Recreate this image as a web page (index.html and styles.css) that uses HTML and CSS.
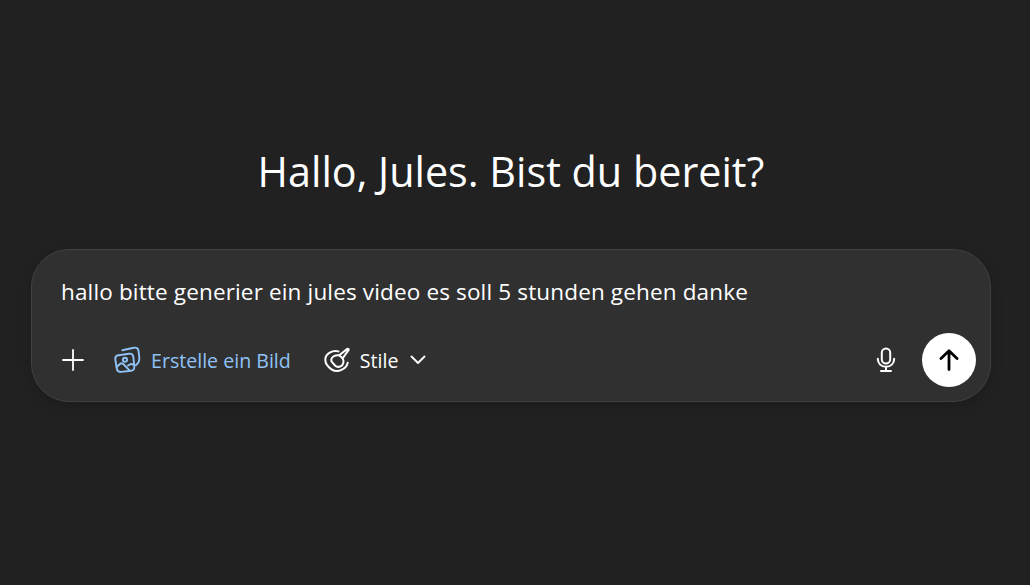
FILE: index.html
```html
<!DOCTYPE html>
<html lang="de">
<head>
<meta charset="utf-8">
<title>Hallo, Jules</title>
<link rel="stylesheet" href="styles.css">
</head>
<body>
<main class="page">
  <h1 class="title">Hallo, Jules. Bist du bereit?</h1>
  <form class="composer">
    <div class="prompt">hallo bitte generier ein jules video es soll 5 stunden gehen danke</div>
    <div class="toolbar">
      <button class="icon-btn plus" type="button" aria-label="Hinzufügen">
        <svg width="22" height="22" viewBox="0 0 22 22" fill="none" stroke="currentColor" stroke-width="1.8" stroke-linecap="round"><path d="M11 1v20M1 11h20"/></svg>
      </button>
      <button class="tool tool-blue" type="button">
        <svg width="28" height="28" viewBox="0 0 28 28" fill="none" stroke="currentColor" stroke-width="1.9" stroke-linecap="round" stroke-linejoin="round"><path d="M2.300 13.500c-.3-2.300 1-4 3.200-4.300l10.500-1.500c2.300-.3 4 1 4.300 3.200l1 9.500c.3 2.300-1 4-3.200 4.300l-10 1.200c-2.300.3-4-1-4.300-3.200z"/><path d="M9.300 4.200l11.500-2.500c2.500-.5 4.300.7 4.700 3l.8 7c.3 2.800-.7 5.500-3.500 7.500"/><circle cx="12" cy="13.800" r="2.100"/><path d="M3.600 21l3.400-3c1-.9 2.300-.9 3.300 0l6 6.200M15 19.600l1.800-1.100c1-.6 2.300-.5 3.200.2"/></svg>
        <span>Erstelle ein Bild</span>
      </button>
      <button class="tool tool-style" type="button">
        <svg width="26" height="26" viewBox="0 0 26 26" fill="none" stroke="currentColor" stroke-width="2" stroke-linecap="round" stroke-linejoin="round"><path d="M14.500 4.400C8.500 3 1.500 6.500 1.300 12.500c-.1 3.500 2.700 7.500 6.200 9.800 3 1.900 6.300 2.300 9.500.9 3.500-1.500 6-4.200 6.700-7.400"/><path d="M23.300 1.900c.9-.5 1.700.3 1.200 1.200l-5.900 8.200-3.400-3z"/><path d="M15.200 8.300c-3.700-.5-7.700 1.200-8 4.500-.1 1.500.6 2.500 1.800 3.400 1 .8 1.400 2 2.800 2.900 3 1.800 7 .2 7.600-3.500.2-1.200.4-2.700-.9-4.300"/></svg>
        <span>Stile</span>
        <svg class="chevron" width="18" height="18" viewBox="0 0 18 18" fill="none" stroke="currentColor" stroke-width="1.9" stroke-linecap="round" stroke-linejoin="round"><path d="M2.500 5.500 9 12l6.500-6.500"/></svg>
      </button>
      <div class="spacer"></div>
      <button class="icon-btn mic" type="button" aria-label="Mikrofon">
        <svg width="22" height="26" viewBox="0 0 22 26" fill="none" stroke="currentColor" stroke-width="2" stroke-linecap="round" stroke-linejoin="round"><rect x="6.800" y="1.500" width="8.400" height="15" rx="4.200"/><path d="M2.800 11.800c0 4.800 3.500 8 8.200 8s8.200-3.200 8.200-8M11 19.800v4M6 24h10"/></svg>
      </button>
      <button class="send" type="button" aria-label="Senden">
        <svg width="20" height="22" viewBox="0 0 20 22" fill="none" stroke="currentColor" stroke-width="2.800" stroke-linecap="round" stroke-linejoin="round"><path d="M10 20.500V2M2 9.500 10 1.800l8 7.700"/></svg>
      </button>
    </div>
  </form>
</main>
</body>
</html>
```

FILE: styles.css
```css
* { box-sizing: border-box; }
html, body { margin: 0; height: 100%; }
body {
  background: #212121;
  color: #fff;
  font-family: "Open Sans", "Noto Sans", "Liberation Sans", sans-serif;
  overflow: hidden;
}
.page {
  display: flex;
  flex-direction: column;
  align-items: center;
  padding: 145px 39px 0 31px;
}
.title {
  margin: 0 0 51px;
  font-size: 41.300px;
  line-height: 53px;
  font-weight: 400;
  white-space: nowrap;
}
.composer {
  width: 960px;
  height: 153px;
  padding: 27px 14px 14px 29px;
  background: #303030;
  border: 1px solid #414141;
  border-radius: 38px;
  box-shadow: 0 4px 14px rgba(0, 0, 0, 0.16);
  display: flex;
  flex-direction: column;
  justify-content: space-between;
}
.prompt {
  font-size: 22.500px;
  letter-spacing: 0.150px;
  line-height: 30px;
  white-space: nowrap;
}
.toolbar {
  display: flex;
  align-items: center;
  height: 54px;
}
.icon-btn, .tool, .send {
  border: 0;
  padding: 0;
  background: none;
  color: #fff;
  font: inherit;
  display: flex;
  align-items: center;
}
.plus { margin: 0 29px 0 1px; }
.tool { gap: 10px; font-size: 19.600px; line-height: 28px; }
.tool span { position: relative; top: 1px; }
.tool-blue { color: #8fc2f5; margin-right: 33px; }
.chevron { margin-left: 1px; }
.spacer { flex: 1; }
.mic { margin-right: 25px; }
.send {
  width: 54px;
  height: 54px;
  border-radius: 50%;
  background: #fff;
  color: #000;
  justify-content: center;
}
```
